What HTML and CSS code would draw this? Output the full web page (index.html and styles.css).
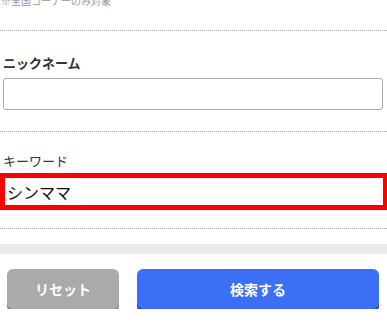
FILE: index.html
```html
<!DOCTYPE html>
<html lang="ja">
<head>
    <meta charset="UTF-8" />
    <meta name="viewport" content="width=device-width, initial-scale=1.0"/>
    <title>検索</title>
    <link rel="stylesheet" href="styles.css">
</head>
<body>
    <form class="search-form" onsubmit="return false;">
        <div class="block block-note">
            <p class="note">※全国コーナーのみ対象</p>
        </div>

        <div class="block field">
            <label class="field-label bold" for="nickname">ニックネーム</label>
            <input type="text" id="nickname" class="text-input" />
        </div>

        <div class="block field field-keyword">
            <label class="field-label" for="keyword">キーワード</label>
            <input type="text" id="keyword" class="text-input keyword-input" value="シンママ" />
        </div>

        <div class="band"></div>

        <div class="actions">
            <button type="reset" class="btn btn-reset">リセット</button>
            <button type="submit" class="btn btn-search">検索する</button>
        </div>
    </form>
</body>
</html>
```

FILE: styles.css
```css
body {
    margin: 0;
    background-color: #fff;
    font-family: "Noto Sans CJK JP", "Noto Sans", sans-serif;
    color: #222;
    overflow: hidden;
}

.search-form {
    width: 387px;
}

.block {
    border-bottom: 1px dotted #aaa;
}

/* top note is scrolled half out of view */
.block-note {
    padding-bottom: 23px;
}

.note {
    margin: -5px 0 0 0;
    font-size: 10px;
    line-height: 12px;
    color: #999;
    padding-left: 1px;
}

.field {
    padding: 22px 4px 21px 3px;
}

.field-keyword {
    padding: 19px 0 18px 0;
}

.field-label {
    display: block;
    font-size: 13px;
    line-height: 20px;
    color: #333;
    margin-bottom: 5px;
}

.field-keyword .field-label {
    padding-left: 3px;
    margin-bottom: 2px;
}

.bold {
    font-weight: bold;
}

.text-input {
    display: block;
    box-sizing: border-box;
    width: 100%;
    height: 32px;
    margin: 0;
    padding: 0 6px;
    border: 1px solid #aaa;
    border-radius: 3px;
    font-family: inherit;
    font-size: 16px;
    color: #111;
    background-color: #fff;
    outline: none;
}

.keyword-input {
    height: 37px;
    border: 5px solid #f00;
    border-right-width: 4px;
    border-radius: 0;
    padding: 0 2px;
}

.band {
    height: 10px;
    margin-top: 15px;
    background-color: #ebebeb;
}

.actions {
    display: flex;
    gap: 18px;
    padding: 15px 8px 0 7px;
}

.btn {
    height: 40px;
    border: none;
    border-radius: 6px;
    font-family: inherit;
    font-size: 14px;
    font-weight: bold;
    color: #fff;
    cursor: pointer;
}

.btn-reset {
    width: 112px;
    background-color: #aaa;
    box-shadow: 0 3px 0 #858585;
}

.btn-search {
    flex: 1;
    background-color: #3a6ff6;
    box-shadow: 0 3px 0 #1d3aa6;
}
```
